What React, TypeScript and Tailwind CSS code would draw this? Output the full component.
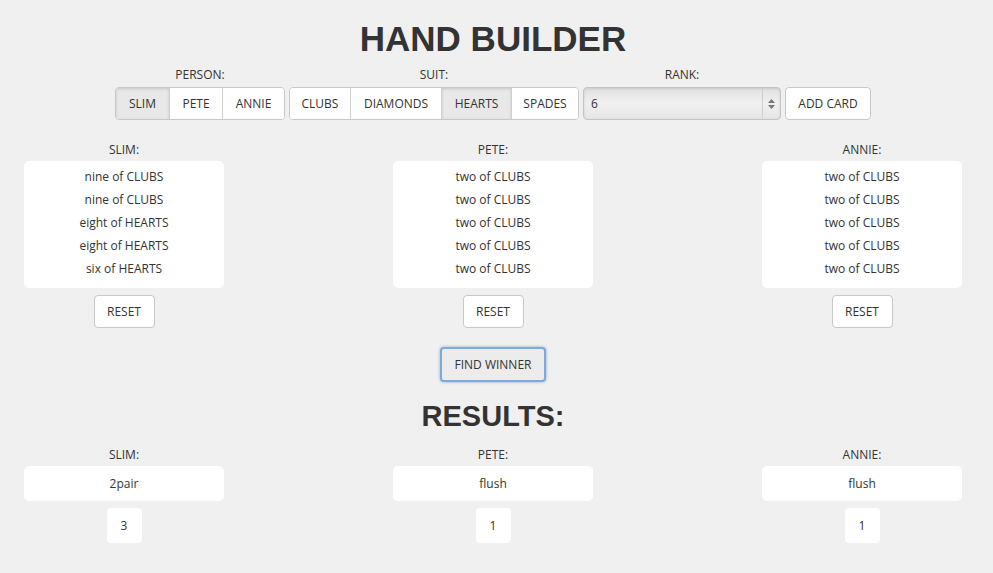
import React from "react";

const font = { fontFamily: '"Open Sans", "DejaVu Sans", sans-serif' };

function Seg({ items, active }: { items: { label: string; w: string }[]; active: string }) {
  return (
    <div className="flex h-[33px] rounded-[4px] border border-[#c8c8c8] bg-white overflow-hidden">
      {items.map((it, i) => (
        <div
          key={it.label}
          className={`${it.w} flex items-center justify-center text-[12px] text-[#333] ${i > 0 ? "border-l border-[#cfcfcf]" : ""} ${it.label === active ? "bg-[#e8e8e8] shadow-[inset_0_1px_3px_rgba(0,0,0,0.15)]" : "bg-white"}`}
        >
          {it.label}
        </div>
      ))}
    </div>
  );
}

function Hand({ name, cards }: { name: string; cards: string[] }) {
  return (
    <div className="flex flex-col items-center w-[200px]">
      <div className="text-[12px] text-[#333] h-[16px] leading-[16px] mb-[3px]">{name}:</div>
      <div className="w-[200px] bg-white rounded-[5px] pt-[4px] pb-[8px] flex flex-col items-center">
        {cards.map((c, i) => (
          <div key={i} className="h-[23px] leading-[23px] text-[12px] text-[#333]">{c}</div>
        ))}
      </div>
      <div className="mt-[7px] w-[61px] h-[33px] rounded-[4px] border border-[#c8c8c8] bg-white flex items-center justify-center text-[12px] text-[#333]">
        RESET
      </div>
    </div>
  );
}

function Result({ name, hand, score }: { name: string; hand: string; score: string }) {
  return (
    <div className="flex flex-col items-center w-[200px]">
      <div className="text-[12px] text-[#333] h-[16px] leading-[16px] mb-[3px]">{name}:</div>
      <div className="w-[200px] h-[35px] bg-white rounded-[5px] flex items-center justify-center text-[12px] text-[#333]">{hand}</div>
      <div className="mt-[7px] w-[35px] h-[35px] bg-white rounded-[4px] flex items-center justify-center text-[12px] text-[#333]">{score}</div>
    </div>
  );
}

export default function App() {
  const slim = ["nine of CLUBS", "nine of CLUBS", "eight of HEARTS", "eight of HEARTS", "six of HEARTS"];
  const two = Array(5).fill("two of CLUBS");
  return (
    <div className="w-[993px] h-[573px] bg-[#f0f0f0] overflow-hidden" style={font}>
      <div className="w-[986px] flex flex-col items-center">
        <h1
          className="mt-[20px] text-[35px] leading-[38px] font-bold text-[#333]"
          style={{ fontFamily: '"Liberation Sans", Arial, sans-serif' }}
        >
          HAND BUILDER
        </h1>
        <div className="mt-[9px] flex items-end gap-[4px]">
          <div className="flex flex-col items-center">
            <div className="text-[12px] text-[#333] h-[16px] leading-[16px] mb-[4px]">PERSON:</div>
            <Seg
              active="SLIM"
              items={[
                { label: "SLIM", w: "w-[53px]" },
                { label: "PETE", w: "w-[53px]" },
                { label: "ANNIE", w: "w-[62px]" },
              ]}
            />
          </div>
          <div className="flex flex-col items-center">
            <div className="text-[12px] text-[#333] h-[16px] leading-[16px] mb-[4px]">SUIT:</div>
            <Seg
              active="HEARTS"
              items={[
                { label: "CLUBS", w: "w-[60px]" },
                { label: "DIAMONDS", w: "w-[91px]" },
                { label: "HEARTS", w: "w-[70px]" },
                { label: "SPADES", w: "w-[67px]" },
              ]}
            />
          </div>
          <div className="flex flex-col items-center">
            <div className="text-[12px] text-[#333] h-[16px] leading-[16px] mb-[4px]">RANK:</div>
            <div className="w-[198px] h-[33px] rounded-[4px] border border-[#c4c4c4] bg-gradient-to-b from-[#e2e2e2] via-[#f0f0f0] to-[#e6e6e6] shadow-[inset_0_1px_3px_rgba(0,0,0,0.12)] flex items-center">
              <div className="flex-1 pl-[7px] text-[12px] text-[#333]">6</div>
              <div className="w-[18px] h-full border-l border-[#cfcfcf] flex flex-col items-center justify-center gap-[2px]">
                <svg width="7" height="4" viewBox="0 0 7 4"><path d="M3.5 0L7 4H0z" fill="#777" /></svg>
                <svg width="7" height="4" viewBox="0 0 7 4"><path d="M0 0H7L3.5 4z" fill="#777" /></svg>
              </div>
            </div>
          </div>
          <div className="w-[86px] h-[33px] rounded-[4px] border border-[#c8c8c8] bg-white flex items-center justify-center text-[12px] text-[#333]">
            ADD CARD
          </div>
        </div>
        <div className="mt-[22px] w-full px-[24px] flex justify-between">
          <Hand name="SLIM" cards={slim} />
          <Hand name="PETE" cards={two} />
          <Hand name="ANNIE" cards={two} />
        </div>
        <div className="mt-[19px] w-[106px] h-[35px] rounded-[4px] border-2 border-[#7fa9dc] bg-[#ececec] shadow-[0_0_3px_rgba(90,140,210,0.7)] flex items-center justify-center text-[12px] text-[#333]">
          FIND WINNER
        </div>
        <h2
          className="mt-[18px] text-[29px] leading-[32px] font-bold text-[#333]"
          style={{ fontFamily: '"Liberation Sans", Arial, sans-serif' }}
        >
          RESULTS:
        </h2>
        <div className="mt-[15px] w-full px-[24px] flex justify-between">
          <Result name="SLIM" hand="2pair" score="3" />
          <Result name="PETE" hand="flush" score="1" />
          <Result name="ANNIE" hand="flush" score="1" />
        </div>
      </div>
    </div>
  );
}
